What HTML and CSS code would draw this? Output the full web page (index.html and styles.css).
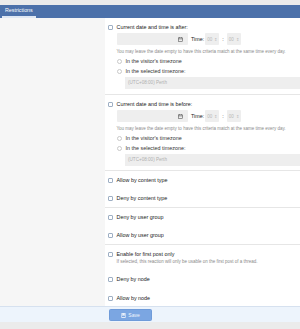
FILE: index.html
```html
<!DOCTYPE html>
<html lang="en">
<head>
    <meta charset="UTF-8">
    <meta name="viewport" content="width=device-width, initial-scale=1.0">
    <title>Restrictions</title>
    <link rel="stylesheet" href="styles.css">
</head>
<body>

<div class="topbar"></div>

<div class="tabs">
    <span class="tab active">Restrictions</span>
</div>

<form class="block">

    <!-- date after -->
    <div class="row">
        <div class="row-label"></div>
        <div class="row-body">
            <label class="check"><span class="box"></span>Current date and time is after:</label>
            <div class="sub">
                <div class="date-line">
                    <div class="date">
                        <svg class="cal" viewBox="0 0 6 6" width="5" height="5">
                            <rect x="0.5" y="1" width="5" height="4.5" fill="none" stroke="#555" stroke-width="0.7"/>
                            <line x1="0.5" y1="2.3" x2="5.5" y2="2.3" stroke="#555" stroke-width="0.7"/>
                            <line x1="1.8" y1="0.2" x2="1.8" y2="1.4" stroke="#555" stroke-width="0.7"/>
                            <line x1="4.2" y1="0.2" x2="4.2" y2="1.4" stroke="#555" stroke-width="0.7"/>
                        </svg>
                    </div>
                    <span class="time-label">Time:</span>
                    <div class="time"><span>00</span><span class="spin">&#8661;</span></div>
                    <span class="colon">:</span>
                    <div class="time"><span>00</span><span class="spin">&#8661;</span></div>
                </div>
                <div class="help">You may leave the date empty to have this criteria match at the same time every day.</div>
                <label class="radio-line first"><span class="radio"></span>In the visitor's timezone</label>
                <label class="radio-line"><span class="radio"></span>In the selected timezone:</label>
                <div class="select">(UTC+08:00) Perth</div>
            </div>
        </div>
    </div>

    <!-- date before -->
    <div class="row">
        <div class="row-label"></div>
        <div class="row-body tight">
            <label class="check"><span class="box"></span>Current date and time is before:</label>
            <div class="sub">
                <div class="date-line">
                    <div class="date">
                        <svg class="cal" viewBox="0 0 6 6" width="5" height="5">
                            <rect x="0.5" y="1" width="5" height="4.5" fill="none" stroke="#555" stroke-width="0.7"/>
                            <line x1="0.5" y1="2.3" x2="5.5" y2="2.3" stroke="#555" stroke-width="0.7"/>
                            <line x1="1.8" y1="0.2" x2="1.8" y2="1.4" stroke="#555" stroke-width="0.7"/>
                            <line x1="4.2" y1="0.2" x2="4.2" y2="1.4" stroke="#555" stroke-width="0.7"/>
                        </svg>
                    </div>
                    <span class="time-label">Time:</span>
                    <div class="time"><span>00</span><span class="spin">&#8661;</span></div>
                    <span class="colon">:</span>
                    <div class="time"><span>00</span><span class="spin">&#8661;</span></div>
                </div>
                <div class="help">You may leave the date empty to have this criteria match at the same time every day.</div>
                <label class="radio-line first"><span class="radio"></span>In the visitor's timezone</label>
                <label class="radio-line"><span class="radio"></span>In the selected timezone:</label>
                <div class="select">(UTC+08:00) Perth</div>
            </div>
        </div>
    </div>

    <div class="row">
        <div class="row-label"></div>
        <div class="row-body">
            <label class="check"><span class="box"></span>Allow by content type</label>
            <label class="check spaced"><span class="box"></span>Deny by content type</label>
        </div>
    </div>

    <div class="row">
        <div class="row-label"></div>
        <div class="row-body">
            <label class="check"><span class="box"></span>Deny by user group</label>
            <label class="check spaced"><span class="box"></span>Allow by user group</label>
        </div>
    </div>

    <div class="row">
        <div class="row-label"></div>
        <div class="row-body last">
            <label class="check"><span class="box"></span>Enable for first post only</label>
            <div class="help sub">If selected, this reaction will only be usable on the first post of a thread.</div>
            <label class="check spaced"><span class="box"></span>Deny by node</label>
            <label class="check spaced wide"><span class="box"></span>Allow by node</label>
        </div>
    </div>

    <div class="footer">
        <button type="button" class="save">
            <svg viewBox="0 0 6 6" width="5" height="5">
                <rect x="0.4" y="0.4" width="5.2" height="5.2" rx="0.5" fill="none" stroke="#fff" stroke-width="0.7"/>
                <rect x="1.5" y="0.4" width="3" height="1.8" fill="#fff"/>
                <rect x="1.4" y="3.3" width="3.2" height="2.2" fill="none" stroke="#fff" stroke-width="0.6"/>
            </svg>
            Save
        </button>
    </div>
</form>

</body>
</html>
```

FILE: styles.css
```css
body {
    margin: 0;
    background-color: #ebebeb;
    font-family: "Liberation Sans", Arial, sans-serif;
    font-size: 5.4px;
    color: #222;
}
.topbar {
    height: 5px;
}
.tabs {
    display: flex;
    height: 13px;
    padding-left: 2px;
    background-color: #4c71aa;
}
.tab {
    padding: 0 3px;
    line-height: 11px;
    font-size: 5.3px;
    color: #fff;
}
.tab.active {
    border-bottom: 2px solid #dfe8f4;
}
.block {
    margin: 0;
    background: #fff;
}
.row {
    display: flex;
}
.row-label {
    width: 105px;
    flex-shrink: 0;
    background-color: #f6f6f6;
}
.row-body {
    flex: 1;
    padding: 5px 0 5px 3px;
    border-bottom: 1px solid #e6e6e6;
}
.row-body.tight {
    padding-bottom: 4px;
}
.row-body.last {
    border-bottom: none;
    padding-bottom: 4px;
}
.check {
    display: flex;
    align-items: center;
    height: 8px;
    white-space: nowrap;
}
.check.spaced {
    margin-top: 10px;
}
.check.wide {
    margin-top: 11px;
}
.box {
    width: 3px;
    height: 3px;
    margin-right: 3.5px;
    border: 1px solid #9eafc4;
    border-radius: 1px;
    background: #fff;
}
.sub {
    margin-left: 8.5px;
}
.date-line {
    display: flex;
    align-items: center;
    height: 12px;
    margin-top: 2px;
}
.date {
    display: flex;
    align-items: center;
    justify-content: flex-end;
    width: 71px;
    height: 12px;
    padding-right: 5px;
    box-sizing: border-box;
    background-color: #eeeeee;
    border-radius: 1px;
}
.time-label {
    margin-left: 3.5px;
    margin-right: 1px;
}
.time {
    display: flex;
    align-items: center;
    justify-content: space-between;
    width: 14px;
    height: 12px;
    padding: 0 2px;
    box-sizing: border-box;
    background-color: #eeeeee;
    border-radius: 1px;
    font-size: 4.5px;
    color: #b8b8b8;
}
.spin {
    font-size: 4px;
}
.colon {
    margin: 0 3px;
}
.help {
    height: 7px;
    margin-top: 3px;
    line-height: 7px;
    font-size: 4.5px;
    color: #8a8a8a;
    white-space: nowrap;
}
.help.sub {
    margin-top: 0;
}
.radio-line {
    display: flex;
    align-items: center;
    height: 8px;
    margin-top: 2px;
    color: #333;
}
.radio {
    width: 3px;
    height: 3px;
    margin-right: 4px;
    border: 1px solid #c9c9c9;
    border-radius: 50%;
    background: #fff;
}
.select {
    height: 12px;
    margin: 2px 0 0 8.5px;
    padding-left: 3px;
    line-height: 12px;
    background-color: #eeeeee;
    font-size: 4.6px;
    color: #b0b0b0;
}
.footer {
    padding: 2px 0 1px 109px;
    background-color: #edf4fc;
    border-top: 1px solid #d6e1ef;
}
.save {
    display: flex;
    align-items: center;
    justify-content: center;
    gap: 2px;
    width: 43px;
    height: 12px;
    padding: 0;
    background-color: #7ba6e2;
    border: 1px solid #6f9bd9;
    border-radius: 1.5px;
    font-family: inherit;
    font-size: 5px;
    color: #f2f6fd;
}
```
